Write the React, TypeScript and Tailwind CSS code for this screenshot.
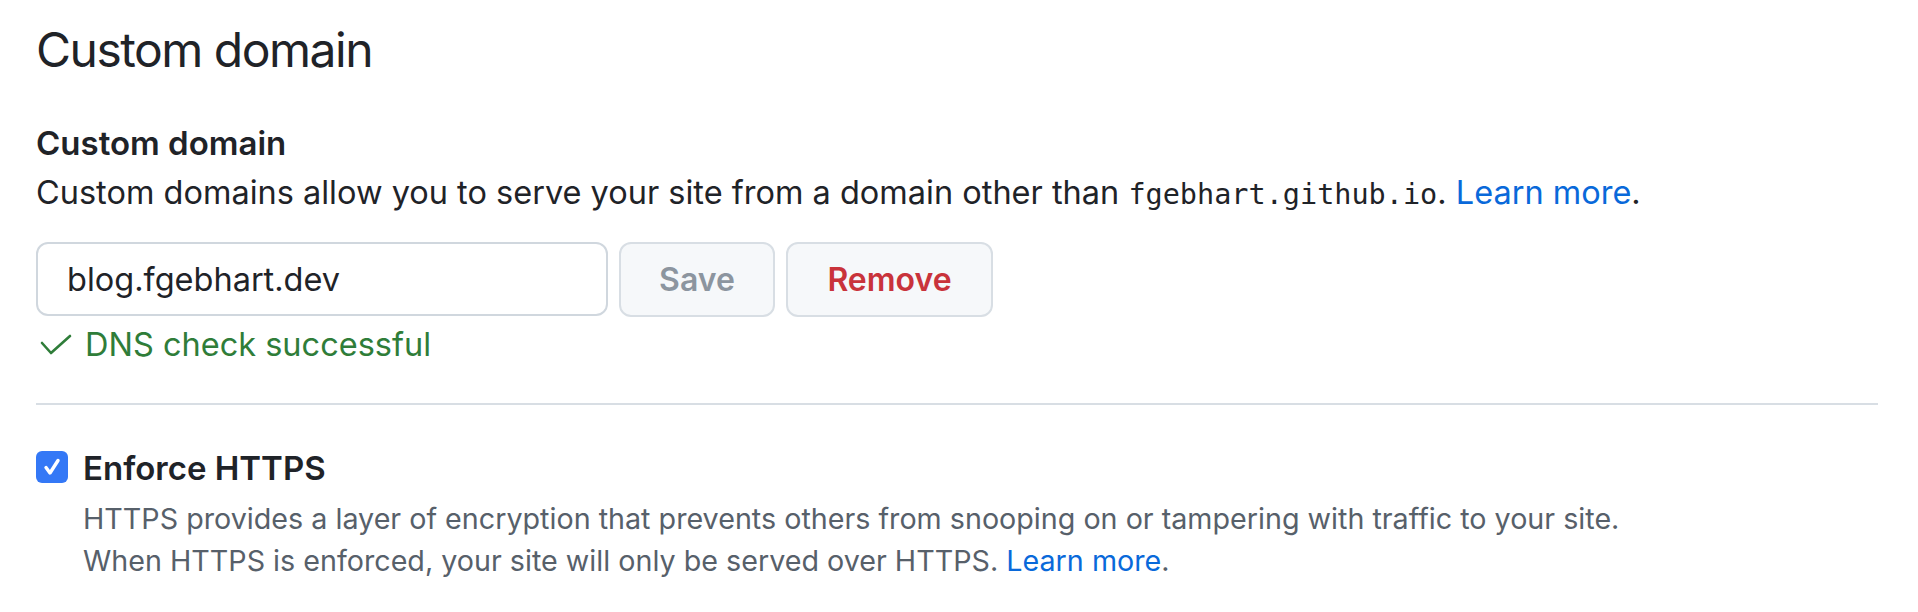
export default function App() {
  return (
    <div className="w-[1918px] h-[612px] bg-white pl-[36px] pr-[40px] pt-[20px] text-[#1f2328] font-['Inter','Noto_Sans',sans-serif]">
      {/* Subhead */}
      <h2 className="text-[48px] leading-[60px] font-normal tracking-[-1.5px]">Custom domain</h2>

      {/* Custom domain form */}
      <div className="mt-[39px]">
        <div className="text-[33px] leading-[49px] font-semibold">Custom domain</div>
        <p className="text-[32.5px] leading-[49px]">
          Custom domains allow you to serve your site from a domain other than{' '}
          <code className="font-['DejaVu_Sans_Mono',monospace] text-[28.5px]">fgebhart.github.io</code>.{' '}
          <a className="text-[#0969da]">Learn more</a>.
        </p>

        <div className="mt-[23px] flex gap-[11px]">
          <input
            readOnly
            value="blog.fgebhart.dev"
            className="w-[572px] h-[74px] rounded-[12px] border-2 border-[#d0d7de] px-[29px] text-[32.5px] text-[#1f2328] outline-none"
          />
          <button className="w-[156px] h-[75px] rounded-[12px] border-2 border-[#d8dee4] bg-[#f6f8fa] text-[32px] font-semibold text-[#8c959f]">
            Save
          </button>
          <button className="w-[207px] h-[75px] rounded-[12px] border-2 border-[#d8dee4] bg-[#f6f8fa] text-[32px] font-semibold text-[#c9333b]">
            Remove
          </button>
        </div>

        <div className="mt-[10px] flex items-center gap-[13px] text-[32.5px] leading-[36px] text-[#2f7d39]">
          <svg width="32" height="22" viewBox="0 0 32 22" fill="none" className="ml-[4px]">
            <polyline points="2,9 11,19 30,2" stroke="#2f7d39" strokeWidth="2.6" strokeLinecap="round" strokeLinejoin="round" />
          </svg>
          <span>DNS check successful</span>
        </div>
      </div>

      <hr className="mt-[40px] border-0 h-[2px] bg-[#d8dee4]" />

      {/* Enforce HTTPS */}
      <div className="mt-[45px] flex gap-[15px]">
        <span className="mt-[1px] w-[32px] h-[32px] shrink-0 rounded-[6px] bg-[#3478f6] flex items-center justify-center">
          <svg width="22" height="22" viewBox="0 0 22 22" fill="none">
            <polyline points="5,11.5 9,17 17,4.5" stroke="white" strokeWidth="3.4" strokeLinecap="round" strokeLinejoin="round" />
          </svg>
        </span>
        <div>
          <div className="text-[33px] leading-[36px] font-semibold">Enforce HTTPS</div>
          <p className="mt-[12px] text-[28.7px] leading-[42px] text-[#57606a]">
            HTTPS provides a layer of encryption that prevents others from snooping on or tampering with traffic to your site.
            <br />
            When HTTPS is enforced, your site will only be served over HTTPS. <a className="text-[#0969da]">Learn more</a>.
          </p>
        </div>
      </div>
    </div>
  );
}
